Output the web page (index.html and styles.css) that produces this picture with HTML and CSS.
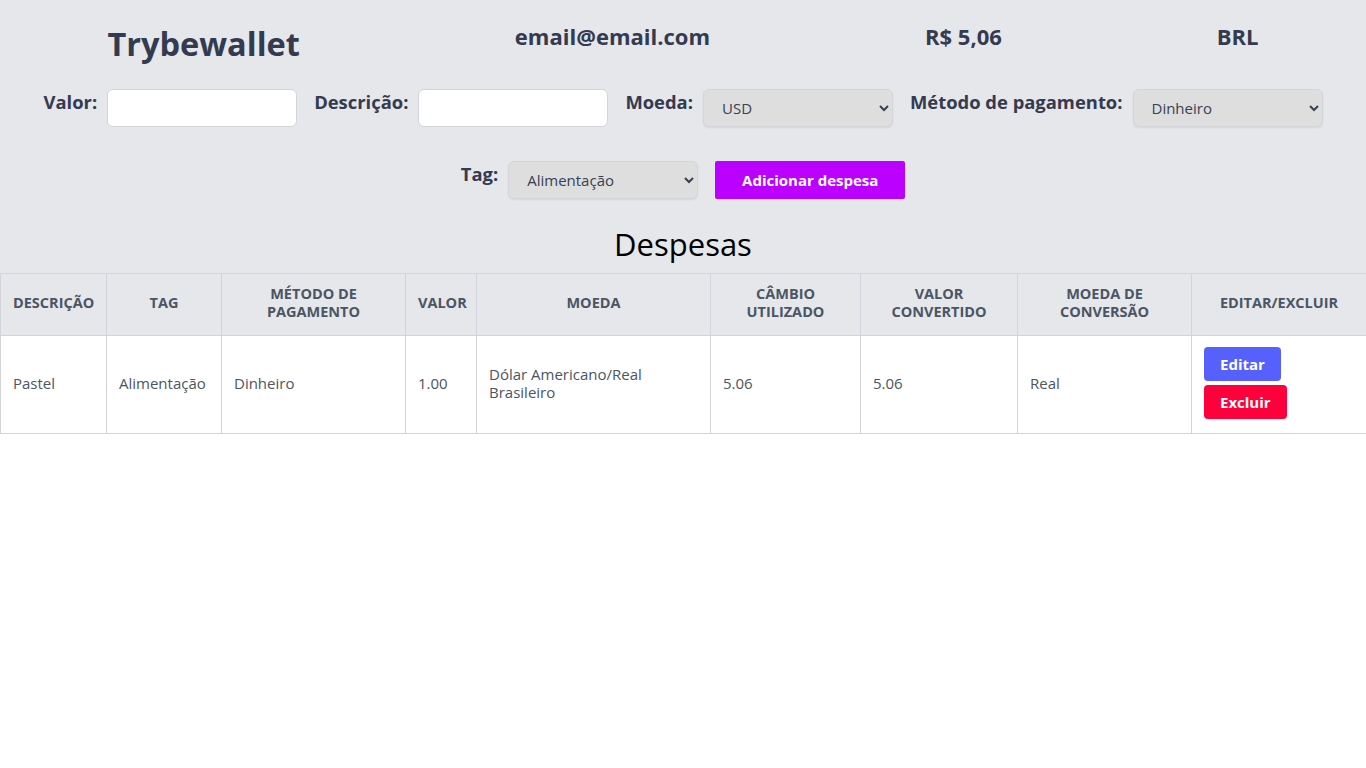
FILE: index.html
```html
<!DOCTYPE html>
<html lang="pt-BR">
<head>
<meta charset="utf-8">
<title>Trybewallet</title>
<link rel="stylesheet" href="styles.css">
</head>
<body>
<div class="top">
  <header class="header">
    <h1 class="brand">Trybewallet</h1>
    <p class="hinfo">email@email.com</p>
    <p class="hinfo">R$ 5,06</p>
    <p class="hinfo">BRL</p>
  </header>
  <form class="form">
    <label class="field">Valor:
      <input class="input" type="text">
    </label>
    <label class="field">Descrição:
      <input class="input" type="text">
    </label>
    <label class="field">Moeda:
      <select class="select"><option>USD</option></select>
    </label>
    <label class="field">Método de pagamento:
      <select class="select"><option>Dinheiro</option></select>
    </label>
    <label class="field">Tag:
      <select class="select"><option>Alimentação</option></select>
    </label>
    <button class="add" type="button">Adicionar despesa</button>
  </form>
  <h2 class="title">Despesas</h2>
</div>
<table class="table">
  <colgroup>
    <col style="width:106px"><col style="width:115px"><col style="width:184px"><col style="width:71px"><col style="width:234px"><col style="width:150px"><col style="width:157px"><col style="width:174px"><col style="width:175px">
  </colgroup>
  <thead>
    <tr>
      <th>Descrição</th>
      <th>Tag</th>
      <th>Método de pagamento</th>
      <th>Valor</th>
      <th>Moeda</th>
      <th>Câmbio utilizado</th>
      <th>Valor convertido</th>
      <th>Moeda de conversão</th>
      <th>Editar/Excluir</th>
    </tr>
  </thead>
  <tbody>
    <tr>
      <td>Pastel</td>
      <td>Alimentação</td>
      <td>Dinheiro</td>
      <td>1.00</td>
      <td>Dólar Americano/Real Brasileiro</td>
      <td>5.06</td>
      <td>5.06</td>
      <td>Real</td>
      <td>
        <div class="actions">
          <button class="btn edit" type="button">Editar</button>
          <button class="btn del" type="button">Excluir</button>
        </div>
      </td>
    </tr>
  </tbody>
</table>
</body>
</html>
```
FILE: styles.css
```css
* { box-sizing: border-box; }
html, body {
  margin: 0;
  padding: 0;
  background: #ffffff;
  font-family: "Open Sans", "Noto Sans", "Liberation Sans", sans-serif;
  color: #374151;
}
.top {
  background: #e5e7eb;
  padding-top: 22px;
}
.header {
  display: flex;
  justify-content: space-around;
  align-items: flex-start;
  height: 66px;
}
.brand {
  margin: 0;
  font-size: 32.5px;
  line-height: 44px;
  font-weight: 700;
  color: #343a4f;
}
.hinfo {
  margin: 0;
  font-size: 22px;
  line-height: 28px;
  font-weight: 700;
  color: #343a4f;
}
.form {
  display: flex;
  flex-wrap: wrap;
  justify-content: center;
  column-gap: 17px;
  row-gap: 33px;
}
.field {
  display: flex;
  align-items: flex-start;
  gap: 10px;
  font-size: 18.4px;
  line-height: 28px;
  font-weight: 700;
  color: #343a4f;
}
.input, .select {
  width: 190px;
  height: 38px;
  border-radius: 6px;
  font-family: inherit;
  font-size: 15px;
  color: #374151;
  margin-top: 1px;
}
.input {
  background: #ffffff;
  border: 1px solid #d1d5db;
}
.select {
  background-color: #dedede;
  border: 1px solid #d4d6dc;
  padding: 0 10px 0 14px;
  box-shadow: 0 1px 2px rgba(0,0,0,0.08);
}
.add {
  width: 190px;
  height: 38px;
  margin-top: 1px;
  border: none;
  border-radius: 2px;
  background: #bb00ff;
  color: #ffffff;
  font-family: inherit;
  font-size: 15px;
  font-weight: 700;
}
.title {
  margin: 0;
  padding: 24px 0 8px;
  text-align: center;
  font-size: 31px;
  line-height: 42px;
  font-weight: 400;
  color: #000000;
}
.table {
  width: 100%;
  border-collapse: collapse;
  table-layout: fixed;
  font-size: 15px;
  line-height: 18px;
  color: #4b5563;
}
.table th, .table td {
  border: 1px solid #d1d5db;
  padding: 12px;
}
.table th {
  background: #e5e7eb;
  text-transform: uppercase;
  font-size: 14.5px;
  font-weight: 700;
  text-align: center;
  height: 62px;
  padding-top: 10px;
  padding-bottom: 14px;
}
.table td {
  background: #ffffff;
  text-align: left;
  height: 98px;
  padding-top: 10px;
  padding-bottom: 14px;
}
.actions {
  display: flex;
  flex-direction: column;
  align-items: flex-start;
  gap: 4px;
}
.btn {
  border: none;
  border-radius: 4px;
  padding: 5px 16px;
  font-family: inherit;
  font-size: 15px;
  line-height: 24px;
  font-weight: 700;
  color: #ffffff;
}
.edit { background: #5660fd; }
.del { background: #ff003d; }
```
